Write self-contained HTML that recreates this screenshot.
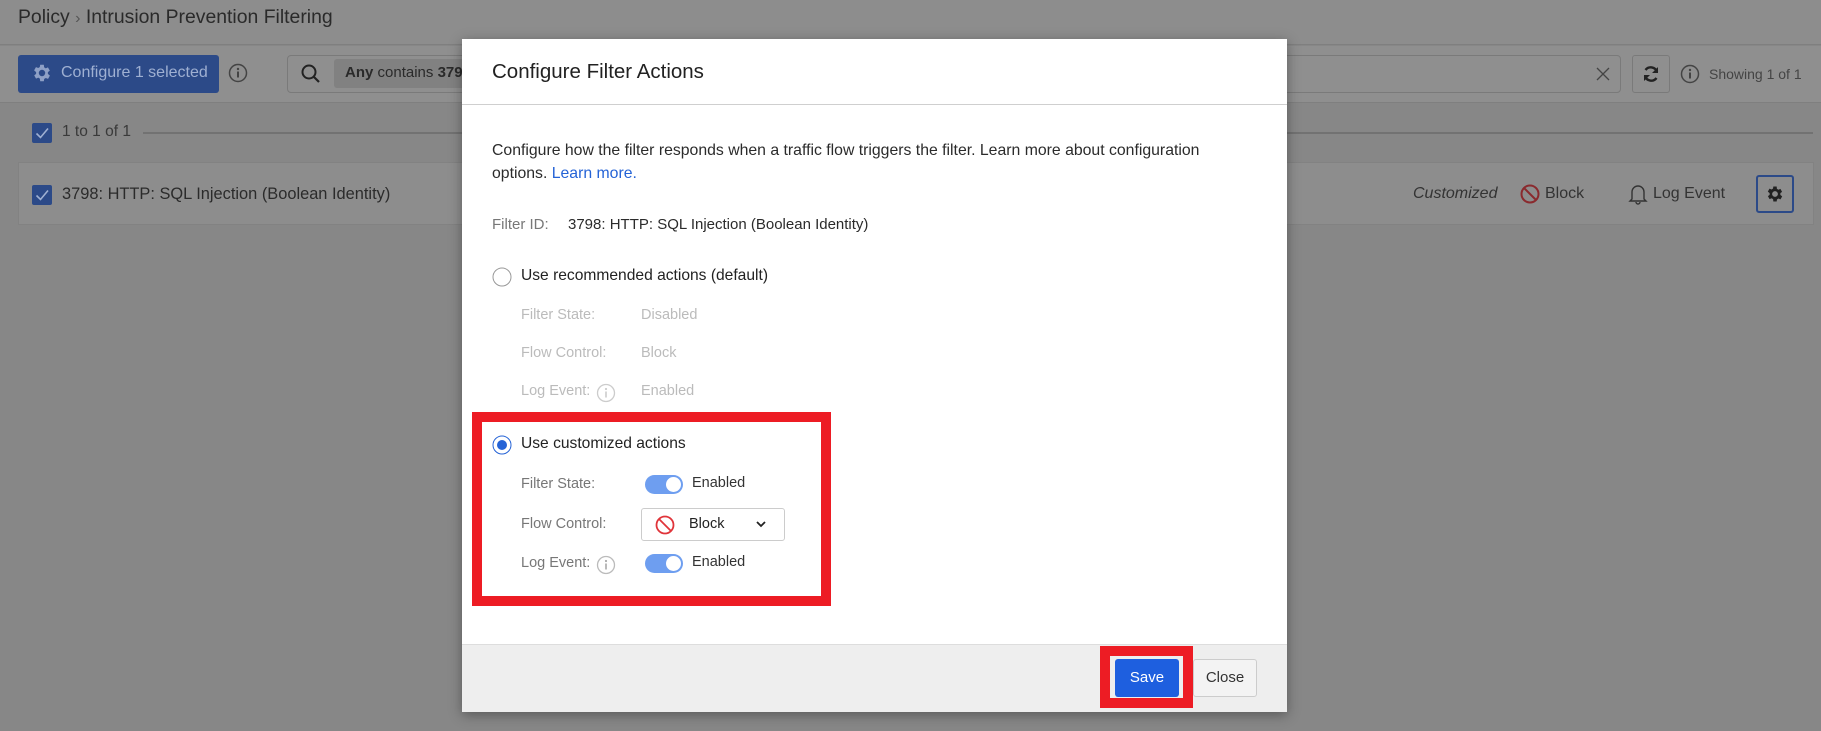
<!DOCTYPE html>
<html><head><meta charset="utf-8"><style>
*{box-sizing:border-box;margin:0;padding:0}
body{width:1821px;height:731px;overflow:hidden;font-family:"Liberation Sans",sans-serif;background:#878787;position:relative;color:#2b2b2b}
.abs{position:absolute}
.t{position:absolute;white-space:nowrap}
</style></head><body>
<div class="abs" style="left:0;top:0;width:1821px;height:45px;background:#8d8d8d;border-bottom:1px solid #7f7f7f"></div>
<div class="t" style="left:18px;top:6px;font-size:19.4px;color:#2a2a2a">Policy <span style="color:#555;font-size:16px">›</span> Intrusion Prevention Filtering</div>
<div class="abs" style="left:0;top:46px;width:1821px;height:57px;background:#8f8f8f;border-bottom:1px solid #7f7f7f"></div>
<div class="abs" style="left:18px;top:55px;width:201px;height:38px;background:#2c4a88;border-radius:3px"></div>
<svg class="abs" style="left:31px;top:62px" width="22" height="22" viewBox="0 0 24 24"><path fill="#8ea0c6" d="M19.4 13a7.5 7.5 0 0 0 0-2l2.1-1.6-2-3.5-2.5 1a7 7 0 0 0-1.7-1L15 3h-4l-.4 2.6a7 7 0 0 0-1.7 1l-2.5-1-2 3.5L6.6 11a7.5 7.5 0 0 0 0 2l-2.1 1.6 2 3.5 2.5-1a7 7 0 0 0 1.7 1L11 21h4l.4-2.6a7 7 0 0 0 1.7-1l2.5 1 2-3.5zM13 15.5a3.5 3.5 0 1 1 0-7 3.5 3.5 0 0 1 0 7z" transform="translate(-1 0)"/></svg>
<div class="t" style="left:61px;top:64px;font-size:16px;color:#9fb0d2">Configure 1 selected</div>
<svg class="abs" style="left:228px;top:63px" width="20" height="20"><circle cx="10" cy="10" r="8.5" fill="none" stroke="#444" stroke-width="1.5"/><circle cx="10" cy="6" r="1.2" fill="#444"/><rect x="9" y="8.5" width="2" height="6" fill="#444"/></svg>
<div class="abs" style="left:287px;top:55px;width:1334px;height:38px;border:1px solid #7a7a7a;border-radius:4px"></div>
<svg class="abs" style="left:300px;top:63px" width="22" height="22"><circle cx="9" cy="9" r="6.5" fill="none" stroke="#222" stroke-width="2"/><path d="M14 14l5 5" stroke="#222" stroke-width="2.2"/></svg>
<div class="abs" style="left:334px;top:59px;width:130px;height:29px;background:#818181;border-radius:3px"></div>
<div class="t" style="left:345px;top:64px;font-size:15px;color:#2a2a2a"><b>Any</b> contains <b>3798</b></div>
<svg class="abs" style="left:1596px;top:67px" width="14" height="14"><path d="M1 1l12 12M13 1L1 13" stroke="#444" stroke-width="1.3"/></svg>
<div class="abs" style="left:1632px;top:55px;width:38px;height:38px;border:1px solid #7a7a7a;border-radius:3px"></div>
<svg class="abs" style="left:1641px;top:64px" width="20" height="20" viewBox="0 0 20 20"><path d="M16 8A6.5 6.5 0 0 0 4.5 6M4 12a6.5 6.5 0 0 0 11.5 2" fill="none" stroke="#222" stroke-width="2.4"/><path d="M17 3v6h-6zM3 17v-6h6z" fill="#222"/></svg>
<svg class="abs" style="left:1680px;top:64px" width="20" height="20"><circle cx="10" cy="10" r="8.5" fill="none" stroke="#444" stroke-width="1.5"/><circle cx="10" cy="6" r="1.2" fill="#444"/><rect x="9" y="8.5" width="2" height="6" fill="#444"/></svg>
<div class="t" style="left:1709px;top:66px;font-size:14px;color:#444">Showing 1 of 1</div>
<div class="abs" style="left:32px;top:123px;width:20px;height:20px;background:#2c4a88;border-radius:2px"></div>
<svg class="abs" style="left:32px;top:123px" width="20" height="20"><path d="M4.5 10.5l4 4 7.5-9" fill="none" stroke="#9fb0d2" stroke-width="1.6"/></svg>
<div class="t" style="left:62px;top:123px;font-size:15.5px;color:#3a3a3a">1 to 1 of 1</div>
<div class="abs" style="left:143px;top:132px;width:1670px;height:2px;background:#727272"></div>
<div class="abs" style="left:18px;top:162px;width:1796px;height:63px;background:#8d8d8d;border:1px solid #828282"></div>
<div class="abs" style="left:32px;top:185px;width:20px;height:20px;background:#2c4a88;border-radius:2px"></div>
<svg class="abs" style="left:32px;top:185px" width="20" height="20"><path d="M4.5 10.5l4 4 7.5-9" fill="none" stroke="#9fb0d2" stroke-width="1.6"/></svg>
<div class="t" style="left:62px;top:185px;font-size:16.4px;color:#2b2b2b">3798: HTTP: SQL Injection (Boolean Identity)</div>
<div class="t" style="left:1413px;top:185px;font-size:16px;color:#333;font-style:italic">Customized</div>
<svg class="abs" style="left:1520px;top:184px" width="20" height="20"><circle cx="10" cy="10" r="8.5" fill="none" stroke="#8a2a2e" stroke-width="2"/><path d="M4 4l12 12" stroke="#8a2a2e" stroke-width="2"/></svg>
<div class="t" style="left:1545px;top:185px;font-size:16px;color:#333">Block</div>
<svg class="abs" style="left:1628px;top:183px" width="20" height="22" viewBox="0 0 20 22"><path d="M4 16V9a6 6 0 0 1 12 0v7l2 2H2z" fill="none" stroke="#333" stroke-width="1.4"/><path d="M8 19a2 2 0 0 0 4 0" fill="none" stroke="#333" stroke-width="1.4"/></svg>
<div class="t" style="left:1653px;top:185px;font-size:16px;color:#333">Log Event</div>
<div class="abs" style="left:1756px;top:175px;width:38px;height:38px;border:2px solid #2c4a88;border-radius:3px"></div>
<svg class="abs" style="left:1765px;top:184px" width="20" height="20" viewBox="0 0 24 24"><path fill="#222" d="M19.4 13a7.5 7.5 0 0 0 0-2l2.1-1.6-2-3.5-2.5 1a7 7 0 0 0-1.7-1L15 3h-4l-.4 2.6a7 7 0 0 0-1.7 1l-2.5-1-2 3.5L6.6 11a7.5 7.5 0 0 0 0 2l-2.1 1.6 2 3.5 2.5-1a7 7 0 0 0 1.7 1L11 21h4l.4-2.6a7 7 0 0 0 1.7-1l2.5 1 2-3.5zM13 15.5a3.5 3.5 0 1 1 0-7 3.5 3.5 0 0 1 0 7z" transform="translate(-1 0)"/></svg>

<div class="abs" style="left:462px;top:39px;width:825px;height:673px;background:#fff;box-shadow:0 3px 12px rgba(0,0,0,.35)"></div>
<div class="t" style="left:492px;top:60px;font-size:20.5px;color:#222">Configure Filter Actions</div>
<div class="abs" style="left:462px;top:104px;width:825px;height:1px;background:#cfcfcf"></div>
<div class="t" style="left:492px;top:139px;font-size:15.8px;color:#2b2b2b;line-height:23px">Configure how the filter responds when a traffic flow triggers the filter. Learn more about configuration<br>options. <span style="color:#2563d6">Learn more.</span></div>
<div class="t" style="left:492px;top:216px;font-size:15px;color:#777">Filter ID:</div>
<div class="t" style="left:568px;top:216px;font-size:15px;color:#2b2b2b">3798: HTTP: SQL Injection (Boolean Identity)</div>
<svg class="abs" style="left:492px;top:267px" width="20" height="20"><circle cx="10" cy="10" r="9" fill="#fff" stroke="#999" stroke-width="1"/></svg>
<div class="t" style="left:521px;top:267px;font-size:15.6px;color:#222">Use recommended actions (default)</div>
<div class="t" style="left:521px;top:307px;font-size:14.5px;color:#bbb">Filter State:</div>
<div class="t" style="left:641px;top:307px;font-size:14.5px;color:#bbb">Disabled</div>
<div class="t" style="left:521px;top:345px;font-size:14.5px;color:#bbb">Flow Control:</div>
<div class="t" style="left:641px;top:345px;font-size:14.5px;color:#bbb">Block</div>
<div class="t" style="left:521px;top:383px;font-size:14.5px;color:#bbb">Log Event:</div>
<svg class="abs" style="left:596px;top:383px" width="20" height="20"><circle cx="10" cy="10" r="8.5" fill="none" stroke="#ccc" stroke-width="1.3"/><circle cx="10" cy="6" r="1.1" fill="#ccc"/><rect x="9.2" y="8.5" width="1.6" height="6" fill="#ccc"/></svg>
<div class="t" style="left:641px;top:383px;font-size:14.5px;color:#bbb">Enabled</div>

<div class="abs" style="left:472px;top:412px;width:359px;height:194px;border:10px solid #ed1c24"></div>
<svg class="abs" style="left:492px;top:435px" width="20" height="20"><circle cx="10" cy="10" r="9" fill="#fff" stroke="#2563d6" stroke-width="1"/><circle cx="10" cy="10" r="5" fill="#2563d6"/></svg>
<div class="t" style="left:521px;top:435px;font-size:15.6px;color:#222">Use customized actions</div>
<div class="t" style="left:521px;top:476px;font-size:14.5px;color:#777">Filter State:</div>
<div class="abs" style="left:645px;top:475px;width:38px;height:19px;border-radius:10px;background:#6e9ef0"></div>
<div class="abs" style="left:666px;top:477px;width:15px;height:15px;border-radius:50%;background:#fff"></div>
<div class="t" style="left:692px;top:475px;font-size:14.5px;color:#333">Enabled</div>
<div class="t" style="left:521px;top:516px;font-size:14.5px;color:#777">Flow Control:</div>
<div class="abs" style="left:641px;top:508px;width:144px;height:33px;border:1px solid #ccc;border-radius:3px"></div>
<svg class="abs" style="left:655px;top:515px" width="20" height="20"><circle cx="10" cy="10" r="8.5" fill="none" stroke="#e0343a" stroke-width="1.8"/><path d="M4 4l12 12" stroke="#e0343a" stroke-width="1.8"/></svg>
<div class="t" style="left:689px;top:516px;font-size:14.5px;color:#222">Block</div>
<svg class="abs" style="left:755px;top:520px" width="12" height="10"><path d="M2 2l4 4 4-4" fill="none" stroke="#222" stroke-width="1.8"/></svg>
<div class="t" style="left:521px;top:555px;font-size:14.5px;color:#777">Log Event:</div>
<svg class="abs" style="left:596px;top:555px" width="20" height="20"><circle cx="10" cy="10" r="8.5" fill="none" stroke="#bbb" stroke-width="1.3"/><circle cx="10" cy="6" r="1.1" fill="#aaa"/><rect x="9.2" y="8.5" width="1.6" height="6" fill="#aaa"/></svg>
<div class="abs" style="left:645px;top:554px;width:38px;height:19px;border-radius:10px;background:#6e9ef0"></div>
<div class="abs" style="left:666px;top:556px;width:15px;height:15px;border-radius:50%;background:#fff"></div>
<div class="t" style="left:692px;top:554px;font-size:14.5px;color:#333">Enabled</div>

<div class="abs" style="left:462px;top:644px;width:825px;height:68px;background:#eeeeee;border-top:1px solid #ddd"></div>
<div class="abs" style="left:1100px;top:646px;width:93px;height:62px;background:#ed1c24"></div>
<div class="abs" style="left:1110px;top:656px;width:73px;height:42px;background:#eee"></div>
<div class="abs" style="left:1115px;top:659px;width:64px;height:38px;background:#1e5fdf;border-radius:3px"></div>
<div class="t" style="left:1115px;top:669px;width:64px;text-align:center;font-size:15px;color:#fff">Save</div>
<div class="abs" style="left:1193px;top:659px;width:64px;height:38px;border:1px solid #ccc;border-radius:3px;background:#f3f3f3"></div>
<div class="t" style="left:1193px;top:669px;width:64px;text-align:center;font-size:15px;color:#333">Close</div>
</body></html>
